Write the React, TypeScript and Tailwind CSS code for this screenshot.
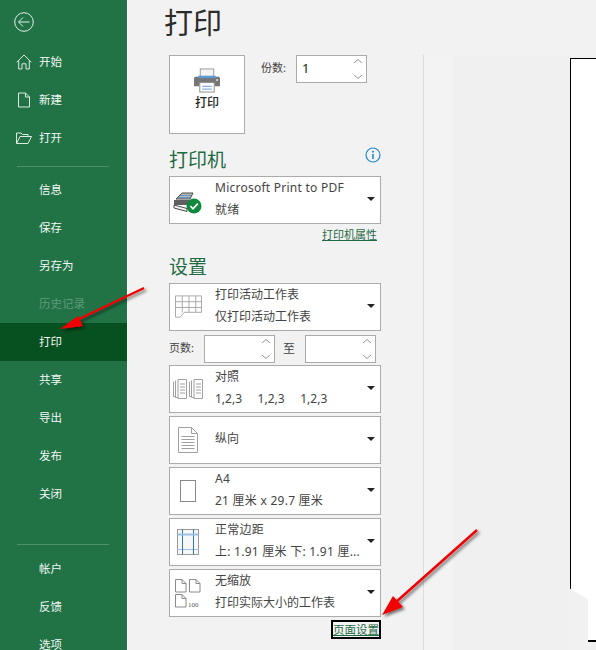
import { ReactNode } from "react";

const font = { fontFamily: '"Noto Sans", "Noto Sans CJK SC", sans-serif' };

function HomeIcon() {
    return (
        <svg width="16" height="16" viewBox="0 0 16 16" fill="none" stroke="#dfeae3" strokeWidth="1">
            <path d="M0.7 8.2 8 1 15.3 8.2M2.7 6.5V15H6V9.8H10V15H13.3V6.5" />
        </svg>
    );
}

function NewIcon() {
    return (
        <svg width="16" height="16" viewBox="0 0 16 16" fill="none" stroke="#dfeae3" strokeWidth="1">
            <path d="M2.5 1H9.5L13.5 5V15H2.5ZM9.5 1V5H13.5" />
        </svg>
    );
}

function OpenIcon() {
    return (
        <svg width="16" height="16" viewBox="0 0 16 16" fill="none" stroke="#dfeae3" strokeWidth="1">
            <path d="M0.5 13.5V3H5L6.5 4.5H12V6.5M0.5 13.5H12L15.5 6.5H4L0.5 13.5Z" />
        </svg>
    );
}

function NavItem({
    label,
    icon,
    active,
    disabled,
}: {
    label: string;
    icon?: ReactNode;
    active?: boolean;
    disabled?: boolean;
}) {
    return (
        <div
            className={
                "relative flex h-[38px] flex-none items-center pl-[39px] text-[11.5px] " +
                (active ? "bg-[#07501f] " : "") +
                (disabled ? "text-[#5f9a78]" : "text-[#f2f7f4]")
            }
        >
            {icon && <span className="absolute left-[16px] top-[11px]">{icon}</span>}
            {label}
        </div>
    );
}

function Spinner() {
    return (
        <svg width="10" height="22" viewBox="0 0 10 22" fill="none" stroke="#8a8a8a" strokeWidth="0.9">
            <path d="M1 5 5 1.5 9 5M1 17 5 20.5 9 17" />
        </svg>
    );
}

function SpinInput({ value, className }: { value?: string; className: string }) {
    return (
        <div
            className={
                "flex items-center justify-between border border-[#ababab] bg-white pl-[5px] pr-[3px] text-[13px] text-[#222] " +
                className
            }
        >
            <span>{value}</span>
            <Spinner />
        </div>
    );
}

function Dropdown({
    icon,
    top,
    bottom,
    mt,
    latin,
}: {
    icon: ReactNode;
    top: string;
    bottom?: string;
    mt: string;
    latin?: boolean;
}) {
    return (
        <div
            className={
                "relative flex h-[48px] w-[212px] flex-none border border-[#ababab] bg-white pl-[45px] pr-[20px] text-xs text-[#444] " +
                (bottom ? "items-start pt-[2px] " : "items-center pb-[4px] ") +
                (latin ? "tracking-[0.25px] " : "") +
                mt
            }
        >
            <span className="absolute left-0 top-[6px] flex h-[34px] w-[36px] items-center justify-center">
                {icon}
            </span>
            <div className="flex min-w-0 flex-col gap-[5px] whitespace-pre leading-[17px]">
                <span>{top}</span>
                {bottom && <span>{bottom}</span>}
            </div>
            <span className="absolute right-[5px] top-[20px] h-0 w-0 border-x-[4px] border-t-[4px] border-x-transparent border-t-[#222]" />
        </div>
    );
}

function PrinterBig() {
    return (
        <svg width="28" height="25" viewBox="0 0 28 26">
            <rect x="7" y="1" width="14" height="9" fill="#f4f4f4" stroke="#9a9a9a" />
            <path d="M2 9H26Q27.5 9 27.5 11V19H22V16H6V19H0.5V11Q0.5 9 2 9Z" fill="#767676" />
            <rect x="5" y="8" width="18" height="2.5" fill="#5b9bd5" />
            <rect x="6.5" y="15" width="15" height="10" fill="#fff" stroke="#8a8a8a" />
            <path d="M9 19H19M9 22H19" stroke="#5b9bd5" strokeWidth="1" />
            <circle cx="24.5" cy="12.5" r="1" fill="#e8e8e8" />
        </svg>
    );
}

function PrinterReady() {
    return (
        <svg className="translate-y-[3px]" width="30" height="24" viewBox="0 0 30 24">
            <path d="M3 8 9 2H20L17 8Z" fill="#b9b9b9" stroke="#4a4a4a" />
            <path d="M7 4.5H18M5.5 6.5H17" stroke="#5f95c0" />
            <path d="M1 9H19V14H1Z" fill="#5f5f5f" />
            <path d="M1 14 14 17.5V20.5L1 17Z" fill="#f2f2f2" stroke="#4a4a4a" />
            <circle cx="21" cy="15" r="7.5" fill="#0f8a3c" />
            <path d="M17.3 15 20 17.8 24.8 12.6" fill="none" stroke="#fff" strokeWidth="1.6" />
        </svg>
    );
}

function SheetIcon() {
    return (
        <svg width="27" height="24" viewBox="0 0 28 24" fill="none" stroke="#a8a8a8">
            <path d="M0.5 0.5H27.5V17.5H9.5L5.5 22.5H0.5ZM0.5 6.5H27.5M0.5 12.5H27.5M7.5 0.5V17.5M14.5 0.5V17.5M21.5 0.5V17.5" />
        </svg>
    );
}

function CollateIcon() {
    return (
        <svg width="31" height="20" viewBox="0 0 31 20" fill="none" stroke="#a0a0a0">
            <path d="M0.5 2.5V17.5H2.5M2.5 1.5V18.5H5M5 0.5H13.5V19.5H5ZM7 5H12M7 8H12M7 11H12M7 14H12" />
            <path d="M16.5 2.5V17.5H18.5M18.5 1.5V18.5H21M21 0.5H29.5V19.5H21ZM23 5H28M23 8H28M23 11H28M23 14H28" />
        </svg>
    );
}

function PortraitIcon() {
    return (
        <svg width="20" height="26" viewBox="0 0 20 26" fill="none" stroke="#a0a0a0">
            <path d="M0.5 0.5H13.5L19.5 6.5V25.5H0.5ZM13.5 0.5V6.5H19.5M3.5 9.5H16.5M3.5 12.5H16.5M3.5 15.5H16.5M3.5 18.5H16.5M3.5 21.5H16.5" />
        </svg>
    );
}

function PaperIcon() {
    return (
        <svg width="16" height="22" viewBox="0 0 16 22" fill="#fff" stroke="#8a8a8a">
            <rect x="0.5" y="0.5" width="15" height="21" />
        </svg>
    );
}

function MarginIcon() {
    return (
        <svg width="22" height="26" viewBox="0 0 22 26" fill="none">
            <rect x="0.5" y="0.5" width="21" height="25" fill="#f7f7f7" stroke="#9a9a9a" />
            <path d="M0.5 20.5H21.5" stroke="#9cc3e6" />
            <path d="M5.5 0.5V25.5M16.5 0.5V25.5" stroke="#2e75b6" />
            <path d="M0.5 5.5H21.5" stroke="#9cc3e6" strokeWidth="2" />
        </svg>
    );
}

function ScaleIcon() {
    return (
        <svg width="27" height="30" viewBox="0 0 27 30" fill="none" stroke="#8a8a8a">
            <path d="M0.5 1.5H7L11 5.5V14H0.5ZM7 1.5V5.5H11" />
            <path d="M14.5 1.5H21L25 5.5V14H14.5ZM21 1.5V5.5H25" />
            <path d="M0.5 16.5H7L11 20.5V29H0.5ZM7 16.5V20.5H11" />
            <text x="13" y="29" fontSize="7" fill="#555" stroke="none" fontFamily="Liberation Serif, serif">
                100
            </text>
        </svg>
    );
}

export default function App() {
    return (
        <div className="relative flex h-[650px] w-[596px] overflow-hidden bg-[#f2f2f2]" style={font}>
            <aside className="flex h-full w-[127px] flex-none flex-col overflow-hidden bg-[#217346]">
                <div className="flex h-[43px] flex-none items-start pl-[14px] pt-[12px]">
                    <svg width="20" height="20" viewBox="0 0 20 20" fill="none" stroke="#e6efe9" strokeWidth="1">
                        <circle cx="10" cy="10" r="9.3" />
                        <path d="M15.5 10H4.8M9 5.5 4.5 10 9 14.5" />
                    </svg>
                </div>
                <NavItem label="开始" icon={<HomeIcon />} />
                <NavItem label="新建" icon={<NewIcon />} />
                <NavItem label="打开" icon={<OpenIcon />} />
                <div className="mb-[4px] ml-[17px] mt-[9px] h-px w-[92px] flex-none bg-[#4f9069]" />
                <NavItem label="信息" />
                <NavItem label="保存" />
                <NavItem label="另存为" />
                <NavItem label="历史记录" disabled />
                <NavItem label="打印" active />
                <NavItem label="共享" />
                <NavItem label="导出" />
                <NavItem label="发布" />
                <NavItem label="关闭" />
                <div className="mb-[5px] ml-[17px] mt-[31px] h-px w-[92px] flex-none bg-[#4f9069]" />
                <NavItem label="帐户" />
                <NavItem label="反馈" />
                <NavItem label="选项" />
            </aside>
            <div className="h-full w-px flex-none bg-[#f8f8f8]" />

            <main className="flex h-full w-[295px] flex-none flex-col pl-[41px]">
                <h1 className="ml-[-5px] mt-[3px] h-[52px] flex-none text-[29px] leading-[40px] text-[#2b2b2b]">打印</h1>
                <div className="flex h-[79px] flex-none items-start">
                    <button className="flex h-[79px] w-[76px] flex-none flex-col items-center gap-[2px] border border-[#ababab] bg-white pt-[12px] text-xs font-medium text-[#222]">
                        <PrinterBig />
                        打印
                    </button>
                    <span className="ml-[16px] mt-[5px] text-[11px] text-[#444]">份数:</span>
                    <SpinInput value="1" className="ml-[10px] h-[28px] w-[71px]" />
                </div>

                <div className="relative mt-[11px] flex h-[31px] w-[212px] flex-none items-center text-[19px] text-[#1f6b43]">
                    打印机
                    <svg className="absolute right-0 top-[2px]" width="16" height="16" viewBox="0 0 16 16" fill="none">
                        <circle cx="8" cy="8" r="7" stroke="#1f8ad2" strokeWidth="1.2" />
                        <circle cx="8" cy="4.7" r="1" fill="#1f8ad2" />
                        <path d="M8 7V12" stroke="#1f8ad2" strokeWidth="1.6" />
                    </svg>
                </div>
                <Dropdown icon={<PrinterReady />} top="Microsoft Print to PDF" bottom="就绪" mt="" latin />
                <div className="mt-[1px] flex h-[20px] w-[208px] flex-none items-center justify-end text-[11px] text-[#1f6b43] underline">
                    打印机属性
                </div>

                <div className="mb-px mt-[7px] flex h-[30px] flex-none items-center text-[19px] text-[#1f6b43]">设置</div>
                <Dropdown icon={<SheetIcon />} top="打印活动工作表" bottom="仅打印活动工作表" mt="" />
                <div className="mt-[4px] flex h-[27px] flex-none items-center text-[11px] text-[#444]">
                    <span className="w-[35px]">页数:</span>
                    <SpinInput className="h-[28px] w-[71px]" />
                    <span className="w-[30px] pl-[8px] text-xs">至</span>
                    <SpinInput className="h-[28px] w-[71px]" />
                </div>
                <Dropdown icon={<CollateIcon />} top="对照" bottom="1,2,3     1,2,3     1,2,3" mt="mt-[3px]" />
                <Dropdown icon={<PortraitIcon />} top="纵向" mt="mt-[3px]" />
                <Dropdown icon={<PaperIcon />} top="A4" bottom="21 厘米 x 29.7 厘米" mt="mt-[3px]" latin />
                <Dropdown icon={<MarginIcon />} top="正常边距" bottom="上: 1.91 厘米 下: 1.91 厘..." mt="mt-[3px]" latin />
                <Dropdown icon={<ScaleIcon />} top="无缩放" bottom="打印实际大小的工作表" mt="mt-[3px]" />
                <div className="ml-[162px] mt-[3px] flex h-[19px] w-[50px] flex-none items-center justify-center border-2 border-black bg-[#f2f2f2] text-[11.5px] leading-none text-[#1f6b43] underline">
                    页面设置
                </div>
            </main>

            <div className="mt-[55px] h-[595px] w-px flex-none bg-[#dcdcdc]" />
            <div className="mt-[55px] h-[595px] w-[29px] flex-none bg-[#f3f3f3]" />
            <div className="mt-[55px] h-[595px] flex-1 bg-[#f0f0f0] pl-[117px] pt-[3px]">
                <div className="h-[584px] w-[60px] border-b-2 border-l border-t border-black bg-white" />
            </div>

            {/* red arrows drawn on top of the page */}
            <svg className="absolute left-0 top-0" width="596" height="650" viewBox="0 0 596 650" fill="none">
                <defs>
                    <filter id="arrow-shadow" x="-30%" y="-30%" width="160%" height="160%">
                        <feDropShadow dx="2" dy="2" stdDeviation="1.6" floodColor="#000" floodOpacity="0.55" />
                    </filter>
                </defs>
                <g filter="url(#arrow-shadow)">
                    <path d="M144 288 77 320" stroke="#f00000" strokeWidth="2.4" />
                    <path d="M60 329 78 316 83 326Z" fill="#f00000" />
                    <path d="M477 530 396 602" stroke="#f00000" strokeWidth="2.4" />
                    <path d="M382 615 393 596 403 607Z" fill="#f00000" />
                </g>
            </svg>
            {/* watermark patch over the page corner */}
            <div className="absolute left-[569px] top-[588px] h-[62px] w-[19px] bg-[#f1f1f1] [clip-path:polygon(0_0,100%_18%,100%_100%,0_100%)]" />
        </div>
    );
}
